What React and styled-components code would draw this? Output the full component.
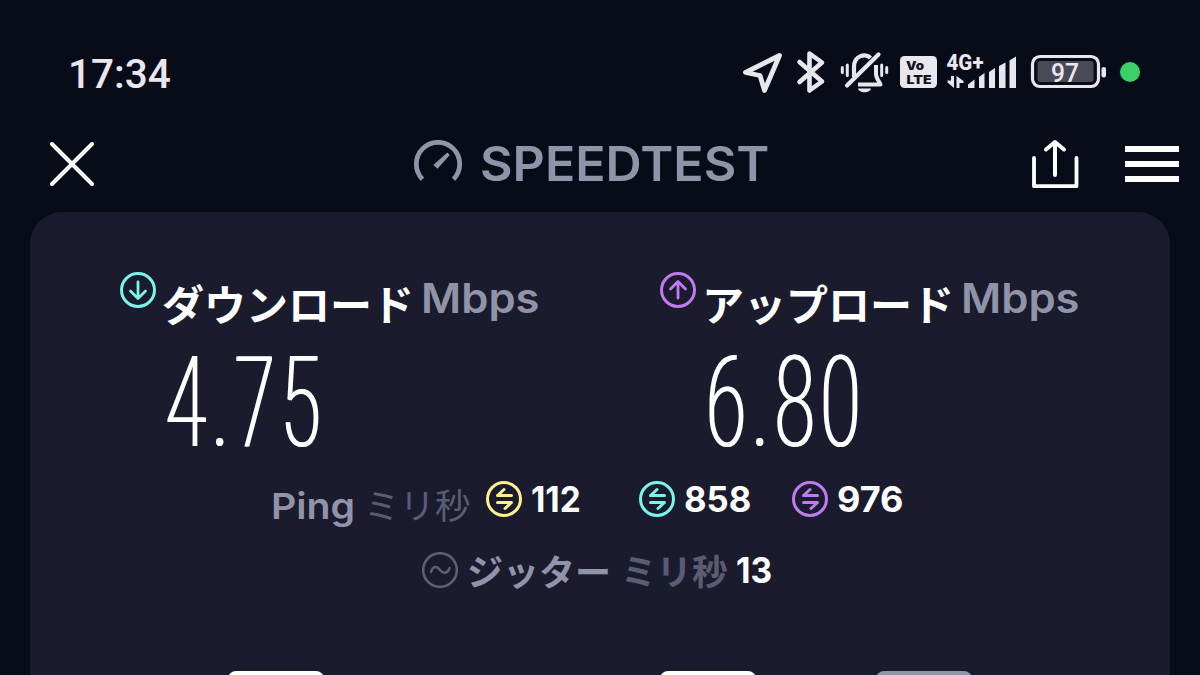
import React from "react";
import styled, { createGlobalStyle } from "styled-components";

const results = [
  { label: "ダウンロード", value: "4.75", color: "#7bf5ea", icon: "M18 10V26M10.500 19L18 26.500L25.500 19" },
  { label: "アップロード", value: "6.80", color: "#c17bf0", icon: "M18 26V10M10.500 17L18 9.500L25.500 17" },
];

const pings = [
  { value: "112", color: "#fdf08d", width: 108, scale: 0.95 },
  { value: "858", color: "#7bf5ea", width: 108, scale: 0.99 },
  { value: "976", color: "#c17bf0", width: 120, scale: 1.03 },
];

const StatusIcons = () => (
  <Icon width="410" height="50" viewBox="0 0 410 50" fill="none">
    <g stroke="#e9e7ee" strokeLinecap="round" strokeLinejoin="round">
      {/* location */}
      <path d="M39.500 5.500L5.500 22.500L20 25.500L24.500 40.500Z" strokeWidth="4.800" />
      {/* bluetooth */}
      <path d="M59.500 12L82 31.500L69.500 40.500V3.500L82 12.500L59.500 32" strokeWidth="4.600" />
      {/* muted bell */}
      <path d="M114 27V17C114 5 126 3 130.500 8" strokeWidth="4.200" strokeLinecap="butt" />
      <path d="M138.500 4.500L107 35.500" strokeWidth="4.200" />
      <path d="M136 15V24C136 28 139 31 140.500 34.500H118" strokeWidth="4" strokeLinecap="butt" />
      <path d="M102.300 17.500V22.500M107.300 15V25.500M141.700 15V25.500M146.700 17.500V22.500" strokeWidth="3" />
    </g>
    <path d="M118 38.500H131C130 43.500 119 43.500 118 38.500Z" fill="#e9e7ee" />
    {/* VoLTE */}
    <rect x="160" y="6" width="37" height="32" rx="4.500" fill="#e9e7ee" />
    <IconText x="166" y="19.500" $size={11.5} $font="Inter" $weight={900} textLength="18" lengthAdjust="spacingAndGlyphs">
      Vo
    </IconText>
    <IconText x="166.500" y="33.800" $size={11.8} $font="Inter" $weight={900} textLength="25" lengthAdjust="spacingAndGlyphs">
      LTE
    </IconText>
    {/* mobile network */}
    <IconText x="206.500" y="19.500" $size={21.5} $light $weight={800} textLength="37" lengthAdjust="spacingAndGlyphs">
      4G+
    </IconText>
    <g fill="#e9e7ee">
      <path d="M228 38V34.500L234.500 29.500V38ZM239 38V27L244.500 23V38ZM249 38V22L255 18V38ZM259 38V16L265.500 12.500V38ZM269.500 38V10.500L276 6.500V38Z" />
      <path d="M211 26H214V38L207.500 32.500V30.500H211ZM216.500 38V26L223.500 31V33H219.500V38Z" />
    </g>
    {/* battery */}
    <rect x="292.500" y="6.500" width="66" height="30" rx="7.500" stroke="#e9e7ee" strokeWidth="3.200" />
    <rect x="297.500" y="11" width="56" height="21" rx="3" fill="#4a4a57" />
    <rect x="361.500" y="17" width="4.500" height="10.500" rx="2" fill="#e9e7ee" />
    <IconText x="311" y="32" $size={25} $light $weight={500} textLength="28" lengthAdjust="spacingAndGlyphs">
      97
    </IconText>
    <circle cx="390" cy="22" r="10" fill="#3ad266" />
  </Icon>
);

const LatencyIcon = ({ color }) => (
  <Icon width="36" height="36" viewBox="0 0 36 36" fill="none" stroke={color} strokeLinecap="round" strokeLinejoin="round">
    <circle cx="18" cy="18" r="16.500" strokeWidth="3" />
    <path d="M25.500 14.500H11.500L18 8.500M11.500 21.500H25.500L19 27.500" strokeWidth="3" />
  </Icon>
);

const App = () => {
  return (
    <Screen>
      <GlobalStyle />
      <StatusBar>
        <Clock>17:34</Clock>
        <StatusIcons />
      </StatusBar>
      <Header>
        <Icon width="46" height="46" viewBox="0 0 46 46" fill="none" stroke="#fff" strokeWidth="4" strokeLinecap="round">
          <path d="M3 3L43 43M43 3L3 43" />
        </Icon>
        <Brand>
          <Icon width="50" height="48" viewBox="0 0 50 48" fill="none">
            <path d="M9.500 39.200A21.700 21.700 0 1 1 40.500 39.200" stroke="#9193a8" strokeWidth="4.800" />
            <path d="M34.300 12.500L36.800 15L24.500 28.700L20.300 25Z" fill="#9193a8" />
          </Icon>
          <BrandName>SPEEDTEST</BrandName>
        </Brand>
        <Icon width="48" height="50" viewBox="0 0 48 50" fill="none" stroke="#fff" strokeWidth="4" strokeLinecap="round" strokeLinejoin="round">
          <path d="M3 19V47.200H45.500V19" strokeWidth="3.800" />
          <path d="M24 36V4M15 10.500L24 3L33 10.500" />
        </Icon>
        <Menu>
          <MenuLine />
          <MenuLine />
          <MenuLine />
        </Menu>
      </Header>
      <Card>
        <Results>
          {results.map((result) => (
            <Result key={result.label}>
              <ResultHead>
                <Icon width="36" height="36" viewBox="0 0 36 36" fill="none" stroke={result.color} strokeLinecap="round" strokeLinejoin="round">
                  <circle cx="18" cy="18" r="16.500" strokeWidth="3" />
                  <path d={result.icon} strokeWidth="2.800" />
                </Icon>
                <ResultLabel>{result.label}</ResultLabel>
                <ResultUnit>Mbps</ResultUnit>
              </ResultHead>
              <ResultValue>{result.value}</ResultValue>
            </Result>
          ))}
        </Results>
        <PingRow>
          <PingLabel>Ping</PingLabel>
          <PingUnit>ミリ秒</PingUnit>
          {pings.map((ping) => (
            <React.Fragment key={ping.value}>
              <LatencyIcon color={ping.color} />
              <Num $width={ping.width} $scale={ping.scale}>
                {ping.value}
              </Num>
            </React.Fragment>
          ))}
        </PingRow>
        <JitterRow>
          <Icon width="36" height="36" viewBox="0 0 36 36" fill="none" stroke="#5f6076" strokeLinecap="round">
            <circle cx="18" cy="18" r="16.800" strokeWidth="2.500" />
            <path d="M9 20C11 13.500 15 14 18 18S25.500 22 27.500 16" strokeWidth="2.400" />
          </Icon>
          <JitterLabel>ジッター</JitterLabel>
          <JitterUnit>ミリ秒</JitterUnit>
          <Num $width={50} $scale={0.96}>
            13
          </Num>
        </JitterRow>
        <Tabs>
          <Tab $gap={336} />
          <Tab $gap={120} />
          <Tab $color="#9193a8" />
        </Tabs>
      </Card>
    </Screen>
  );
};

const GlobalStyle = createGlobalStyle`
  body {
    margin: 0;
    background-color: #080b18;
  }
`;
const Screen = styled.div`
  width: 1200px;
  height: 675px;
  display: flex;
  flex-direction: column;
  overflow: hidden;
  background-color: #080b18;
  color: white;
  font-family: Inter, "Noto Sans CJK JP", sans-serif;
  white-space: nowrap;
`;
const Icon = styled.svg`
  display: block;
  flex: none;
`;
const IconText = styled.text`
  font-family: ${(props) => props.$font || "Roboto"}, sans-serif;
  font-size: ${(props) => props.$size}px;
  font-weight: ${(props) => props.$weight};
  fill: ${(props) => (props.$light ? "#e9e7ee" : "#11131f")};
`;
const StatusBar = styled.div`
  display: flex;
  justify-content: space-between;
  box-sizing: border-box;
  height: 136px;
  padding: 50px 50px 0 68px;
`;
const Clock = styled.div`
  font-family: Roboto, sans-serif;
  font-size: 40.5px;
  font-weight: 500;
  line-height: 48px;
  color: #e9e7ee;
`;
const Header = styled.div`
  display: flex;
  align-items: center;
  box-sizing: border-box;
  height: 56px;
  padding: 0 21px 0 49px;
`;
const Brand = styled.div`
  display: flex;
  align-items: center;
  width: 618px;
  margin-left: 318px;
`;
const BrandName = styled.div`
  margin-left: 17px;
  font-size: 47.5px;
  font-weight: 600;
  line-height: 56px;
  color: #9193a8;
  transform: scaleX(1.055);
  transform-origin: left;
`;
const Menu = styled.div`
  display: flex;
  flex-direction: column;
  gap: 9px;
  width: 54px;
  margin-left: auto;
`;
const MenuLine = styled.div`
  height: 6px;
  background-color: white;
`;
const Card = styled.div`
  display: flex;
  flex-direction: column;
  box-sizing: border-box;
  height: 463px;
  margin: 20px 30px 0;
  padding-top: 60px;
  border-radius: 32px 32px 0 0;
  background-color: #1b1b2e;
`;
const Results = styled.div`
  display: flex;
  padding-left: 90px;
`;
const Result = styled.div`
  flex: none;
  width: 540px;
`;
const ResultHead = styled.div`
  display: flex;
  height: 60px;
`;
const ResultLabel = styled.div`
  width: 259px;
  margin-left: 6px;
  font-family: "Noto Sans CJK JP", sans-serif;
  font-size: 42px;
  font-weight: 700;
  line-height: 61px;
`;
const ResultUnit = styled.div`
  font-size: 41.5px;
  font-weight: 600;
  line-height: 52px;
  color: #9193a8;
  transform: scaleX(1.05);
  transform-origin: left;
`;
const ResultValue = styled.div`
  width: 240px;
  height: 149px;
  padding-left: 44px;
  font-family: Roboto, sans-serif;
  font-size: 127px;
  font-weight: 200;
  font-stretch: 75%;
  letter-spacing: 4.8px;
  line-height: 141px;
  text-shadow: 2px 0 0 white;
  transform: scaleX(0.69);
  transform-origin: 44px 0;
`;
const PingRow = styled.div`
  display: flex;
  height: 71px;
  padding-left: 241px;
`;
const PingLabel = styled.div`
  width: 93px;
  font-size: 36px;
  font-weight: 600;
  line-height: 51px;
  color: #9193a8;
  transform: scaleX(1.09);
  transform-origin: left;
`;
const PingUnit = styled.div`
  width: 122px;
  font-family: "Noto Sans CJK JP", sans-serif;
  font-size: 35.5px;
  font-weight: 400;
  line-height: 45px;
  color: #5b5c72;
`;
const Num = styled.div`
  width: ${(props) => props.$width}px;
  margin-left: 9px;
  font-size: 35px;
  font-weight: 650;
  line-height: 37px;
  transform: scaleX(${(props) => props.$scale});
  transform-origin: left;
`;
const JitterRow = styled.div`
  display: flex;
  height: 119px;
  padding-left: 392px;
`;
const JitterLabel = styled.div`
  width: 154px;
  margin-left: 9px;
  font-family: "Noto Sans CJK JP", sans-serif;
  font-size: 36px;
  font-weight: 700;
  line-height: 36px;
  color: #9193a8;
`;
const JitterUnit = styled.div`
  width: 106px;
  font-family: "Noto Sans CJK JP", sans-serif;
  font-size: 35.5px;
  font-weight: 700;
  line-height: 36px;
  color: #5b5c72;
`;
const Tabs = styled.div`
  display: flex;
  height: 4px;
  padding-left: 198px;
  overflow: hidden;
`;
const Tab = styled.div`
  flex: none;
  width: 96px;
  height: 40px;
  margin-right: ${(props) => props.$gap || 0}px;
  border-radius: 8px;
  background-color: ${(props) => props.$color || "#fff"};
`;

export default App;
